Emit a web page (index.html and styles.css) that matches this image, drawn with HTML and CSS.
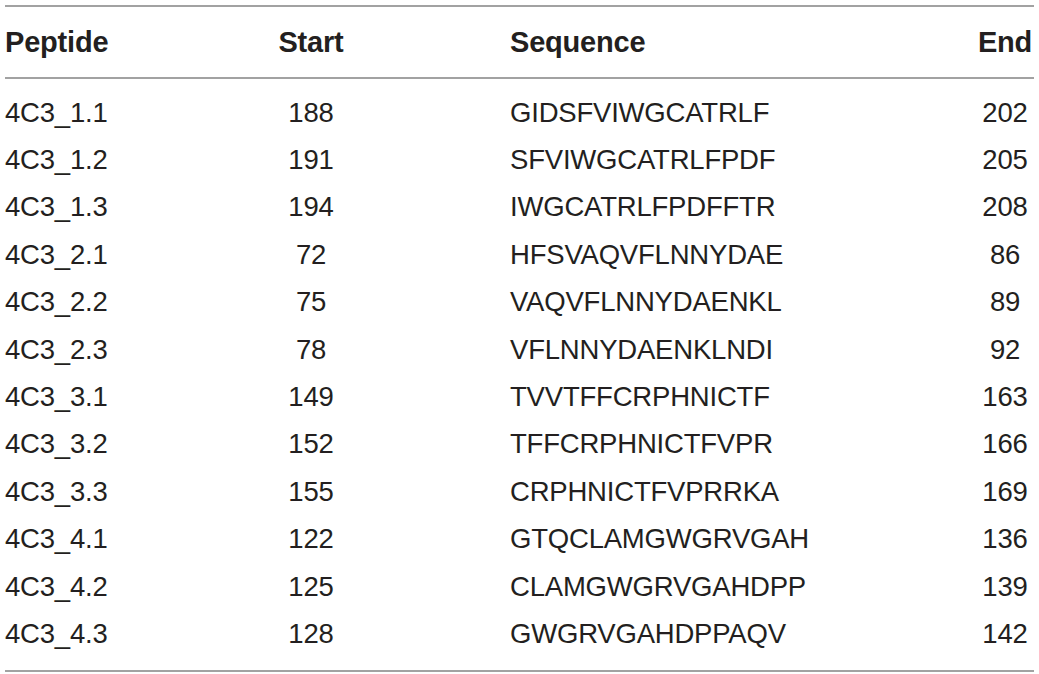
FILE: index.html
```html
<!DOCTYPE html>
<html>
<head>
<meta charset="utf-8">
<link rel="stylesheet" href="styles.css">
</head>
<body>
<table class="peptides">
  <colgroup>
    <col class="c-pep"><col class="c-start"><col class="c-seq"><col class="c-end">
  </colgroup>
  <thead>
    <tr><th class="pep">Peptide</th><th class="num">Start</th><th class="seq">Sequence</th><th class="num">End</th></tr>
  </thead>
  <tbody>
    <tr><td class="pep">4C3_1.1</td><td class="num">188</td><td class="seq">GIDSFVIWGCATRLF</td><td class="num">202</td></tr>
    <tr><td class="pep">4C3_1.2</td><td class="num">191</td><td class="seq">SFVIWGCATRLFPDF</td><td class="num">205</td></tr>
    <tr><td class="pep">4C3_1.3</td><td class="num">194</td><td class="seq">IWGCATRLFPDFFTR</td><td class="num">208</td></tr>
    <tr><td class="pep">4C3_2.1</td><td class="num">72</td><td class="seq">HFSVAQVFLNNYDAE</td><td class="num">86</td></tr>
    <tr><td class="pep">4C3_2.2</td><td class="num">75</td><td class="seq">VAQVFLNNYDAENKL</td><td class="num">89</td></tr>
    <tr><td class="pep">4C3_2.3</td><td class="num">78</td><td class="seq">VFLNNYDAENKLNDI</td><td class="num">92</td></tr>
    <tr><td class="pep">4C3_3.1</td><td class="num">149</td><td class="seq">TVVTFFCRPHNICTF</td><td class="num">163</td></tr>
    <tr><td class="pep">4C3_3.2</td><td class="num">152</td><td class="seq">TFFCRPHNICTFVPR</td><td class="num">166</td></tr>
    <tr><td class="pep">4C3_3.3</td><td class="num">155</td><td class="seq">CRPHNICTFVPRRKA</td><td class="num">169</td></tr>
    <tr><td class="pep">4C3_4.1</td><td class="num">122</td><td class="seq">GTQCLAMGWGRVGAH</td><td class="num">136</td></tr>
    <tr><td class="pep">4C3_4.2</td><td class="num">125</td><td class="seq">CLAMGWGRVGAHDPP</td><td class="num">139</td></tr>
    <tr><td class="pep">4C3_4.3</td><td class="num">128</td><td class="seq">GWGRVGAHDPPAQV</td><td class="num">142</td></tr>
  </tbody>
</table>
</body>
</html>
```
FILE: styles.css
```css
html, body {
  margin: 0;
  padding: 0;
  background: #ffffff;
}
body {
  padding: 5px 5px 0 5px;
  font-family: "Liberation Sans", Arial, sans-serif;
  color: #231f20;
}
.peptides {
  width: 1029px;
  border-collapse: collapse;
  table-layout: fixed;
  font-size: 27.5px;
  line-height: 30px;
}
.c-pep { width: 245px; }
.c-start { width: 122px; }
.c-seq { width: 604px; }
.c-end { width: 58px; }

.peptides thead tr {
  border-top: 2px solid #a2a2a2;
  border-bottom: 2px solid #a2a2a2;
}
.peptides tbody {
  border-bottom: 2px solid #a2a2a2;
}
.peptides th {
  font-weight: bold;
  height: 70px;
  padding: 0;
  vertical-align: middle;
  font-size: 29px;
  letter-spacing: -0.2px;
}
.peptides td {
  height: 47.4px;
  padding: 0;
  vertical-align: middle;
  font-weight: normal;
  letter-spacing: -0.2px;
}
.peptides tbody tr:first-child td { padding-top: 10px; }
.peptides tbody tr:last-child td { padding-bottom: 12px; }

.pep { text-align: left; }
.num { text-align: center; white-space: nowrap; }
.seq { text-align: left; padding-left: 138px !important; }
```
